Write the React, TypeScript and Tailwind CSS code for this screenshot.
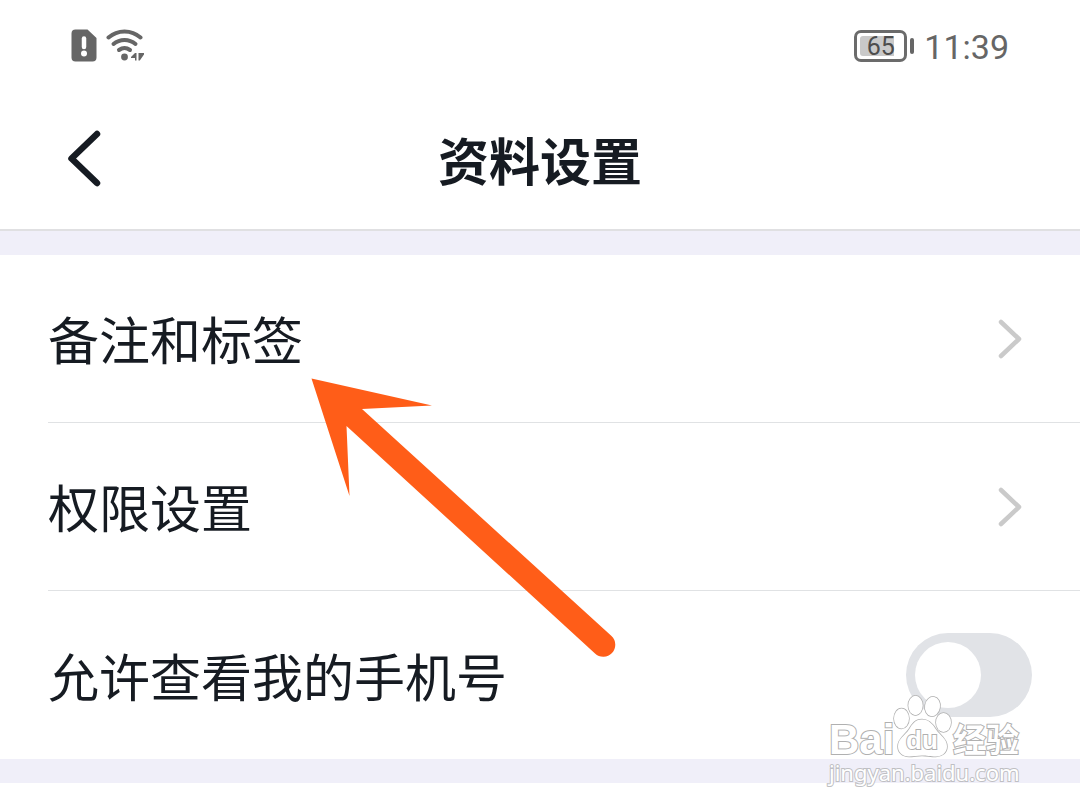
import React, { useState } from "react";

function SimAlertIcon() {
  return (
    <svg width="26" height="34" viewBox="0 0 26 34" aria-hidden="true">
      <path d="M5 .5h11.500L25.500 9v19.500a4 4 0 0 1-4 4H4.500a4 4 0 0 1-4-4V4.500a4 4 0 0 1 4-4Z" fill="#666" />
      <path d="M13 9.500v8.500" stroke="#fff" strokeWidth="4.500" strokeLinecap="round" />
      <circle cx="13" cy="24.500" r="3" fill="#fff" />
    </svg>
  );
}

function WifiIcon() {
  return (
    <svg width="38" height="34" viewBox="0 0 38 34" aria-hidden="true">
      <g fill="none" stroke="#666" strokeWidth="4" strokeLinecap="round">
        <path d="M2.500 8.500a24 24 0 0 1 32 0" />
        <path d="M7.500 15a17 17 0 0 1 22 0" />
        <path d="M13 21a9.500 9.500 0 0 1 11 0" />
      </g>
      <circle cx="18.500" cy="28" r="3.400" fill="#666" />
      <path d="M30.500 24v7.500h-1.500v-2.500H25v-1l4-4ZM32.500 24H38v1.500L33.800 31.500h-1.300Z" fill="#666" />
    </svg>
  );
}

function Battery({ level }: { level: number }) {
  return (
    <div className="flex items-center gap-[3px]">
      <div className="relative flex h-8 w-[53px] items-center justify-center rounded-[7px] border-[3px] border-[#6b6b6b]">
        <div className="absolute inset-y-[3px] left-[3px] w-[34px] rounded-l-[3px] bg-[#c9c9c9]" />
        <span className="relative text-[25px] leading-none text-[#4d4d4d]">{level}</span>
      </div>
      <div className="h-4 w-1 rounded-full bg-[#666]" />
    </div>
  );
}

function ChevronRight() {
  return (
    <svg width="26" height="42" viewBox="0 0 26 42" className="mr-[9px] shrink-0" aria-hidden="true">
      <path d="M4 4l18 17L4 38" fill="none" stroke="#cacaca" strokeWidth="4.500" strokeLinecap="round" strokeLinejoin="round" />
    </svg>
  );
}

function Watermark() {
  return (
    <div className="pointer-events-none absolute right-[57px] top-[440px] flex w-[194px] flex-col text-white">
      <div className="flex h-[64px] items-end [-webkit-text-stroke:2px_#b0b0b0] [paint-order:stroke_fill]">
        <span className="w-[64px] font-['Liberation_Sans',sans-serif] text-[42px] font-bold leading-[38px]">Bai</span>
        <div className="relative h-[64px] w-[60px] shrink-0">
          <svg width="60" height="64" viewBox="0 0 60 64" aria-hidden="true" fill="#fff" stroke="#b0b0b0" strokeWidth="1.500">
            <ellipse cx="8.500" cy="23.500" rx="7.500" ry="10" />
            <ellipse cx="22.500" cy="10.500" rx="7.200" ry="9.700" />
            <ellipse cx="39.500" cy="11.500" rx="7.500" ry="9.700" transform="rotate(10 39.500 11.500)" />
            <ellipse cx="50.500" cy="27.500" rx="7.500" ry="9.500" />
            <path d="M29 24.500c7 0 11 5 14 10 4 6 11 9 11 17 0 6-5 10-11 10-6 0-9-1-14-1s-8 1-13 1C9 61.500 5 57 5 51.500c0-8 7-11 11-17 3-5 6-10 13-10Z" />
          </svg>
          <span className="absolute left-[13px] top-[33px] font-['Liberation_Sans',sans-serif] text-[26px] font-bold leading-6">du</span>
        </div>
        <span className="h-[39px] font-['Noto_Sans_CJK_SC',sans-serif] text-[33px] font-bold leading-[36px]">经验</span>
      </div>
      <span className="font-['Noto_Sans',sans-serif] text-[22px] leading-[26px] [-webkit-text-stroke:2px_#bfbfc3] [paint-order:stroke_fill]">
        jingyan.baidu.com
      </span>
    </div>
  );
}

export default function App() {
  const [showPhone, setShowPhone] = useState(false);

  return (
    <div className="min-h-screen overflow-x-hidden bg-white font-['Noto_Sans_CJK_SC',sans-serif] text-[#161b22]">
      {/* Status bar */}
      <div className="flex h-[92px] items-center justify-between pl-[71px] pr-[71px] font-['Roboto',sans-serif]">
        <div className="flex items-center gap-[9px]">
          <SimAlertIcon />
          <WifiIcon />
        </div>
        <div className="flex items-center gap-[10px]">
          <Battery level={65} />
          <span className="pt-[2px] text-[34px] leading-10 text-[#666]">11:39</span>
        </div>
      </div>

      {/* Title bar */}
      <header className="grid h-[139px] grid-cols-[1fr_auto_1fr] items-center border-b-2 border-[#e0e0e2] pb-[3px]">
        <button type="button" aria-label="返回" className="ml-[66px] justify-self-start">
          <svg width="36" height="60" viewBox="0 0 36 60" aria-hidden="true">
            <path d="M31 5L5.500 29.500 31 54" fill="none" stroke="#161b22" strokeWidth="6.500" strokeLinecap="round" strokeLinejoin="round" />
          </svg>
        </button>
        <h1 className="text-[51px] font-bold leading-none">资料设置</h1>
      </header>

      <div className="h-6 bg-[#f0eff9]" />

      <main className="relative">
        <ul className="pl-12 text-[51px]">
          <li className="border-b border-[#e0e2e4]">
            <button type="button" className="flex h-[167px] w-full items-center justify-between pr-12">
              <span>备注和标签</span>
              <ChevronRight />
            </button>
          </li>
          <li className="border-b border-[#e0e2e4]">
            <button type="button" className="flex h-[167px] w-full items-center justify-between pr-12">
              <span>权限设置</span>
              <ChevronRight />
            </button>
          </li>
          <li className="flex h-[168px] items-center justify-between pr-12">
            <label htmlFor="show-phone">允许查看我的手机号</label>
            <input
              id="show-phone"
              type="checkbox"
              role="switch"
              checked={showPhone}
              onChange={(e) => setShowPhone(e.target.checked)}
              className="h-[84px] w-[126px] shrink-0 appearance-none rounded-full bg-[#e1e3e7] p-[9px] before:block before:size-[66px] before:rounded-full before:bg-white before:transition-transform checked:bg-[#3370ff] checked:before:translate-x-[42px]"
            />
          </li>
        </ul>
        <div className="h-6 bg-[#f0eff9]" />

        {/* Pointer to the first row */}
        <svg className="pointer-events-none absolute left-[310px] top-[122px]" width="310" height="284" viewBox="310 377 310 284" aria-hidden="true">
          <path
            d="M311.500 378.500L432 405.500L362 409L611.500 636A11.700 11.700 0 0 1 595 653.500L346.500 426L349.500 496Z"
            fill="#ff5d18"
          />
        </svg>

        <Watermark />
      </main>
    </div>
  );
}
